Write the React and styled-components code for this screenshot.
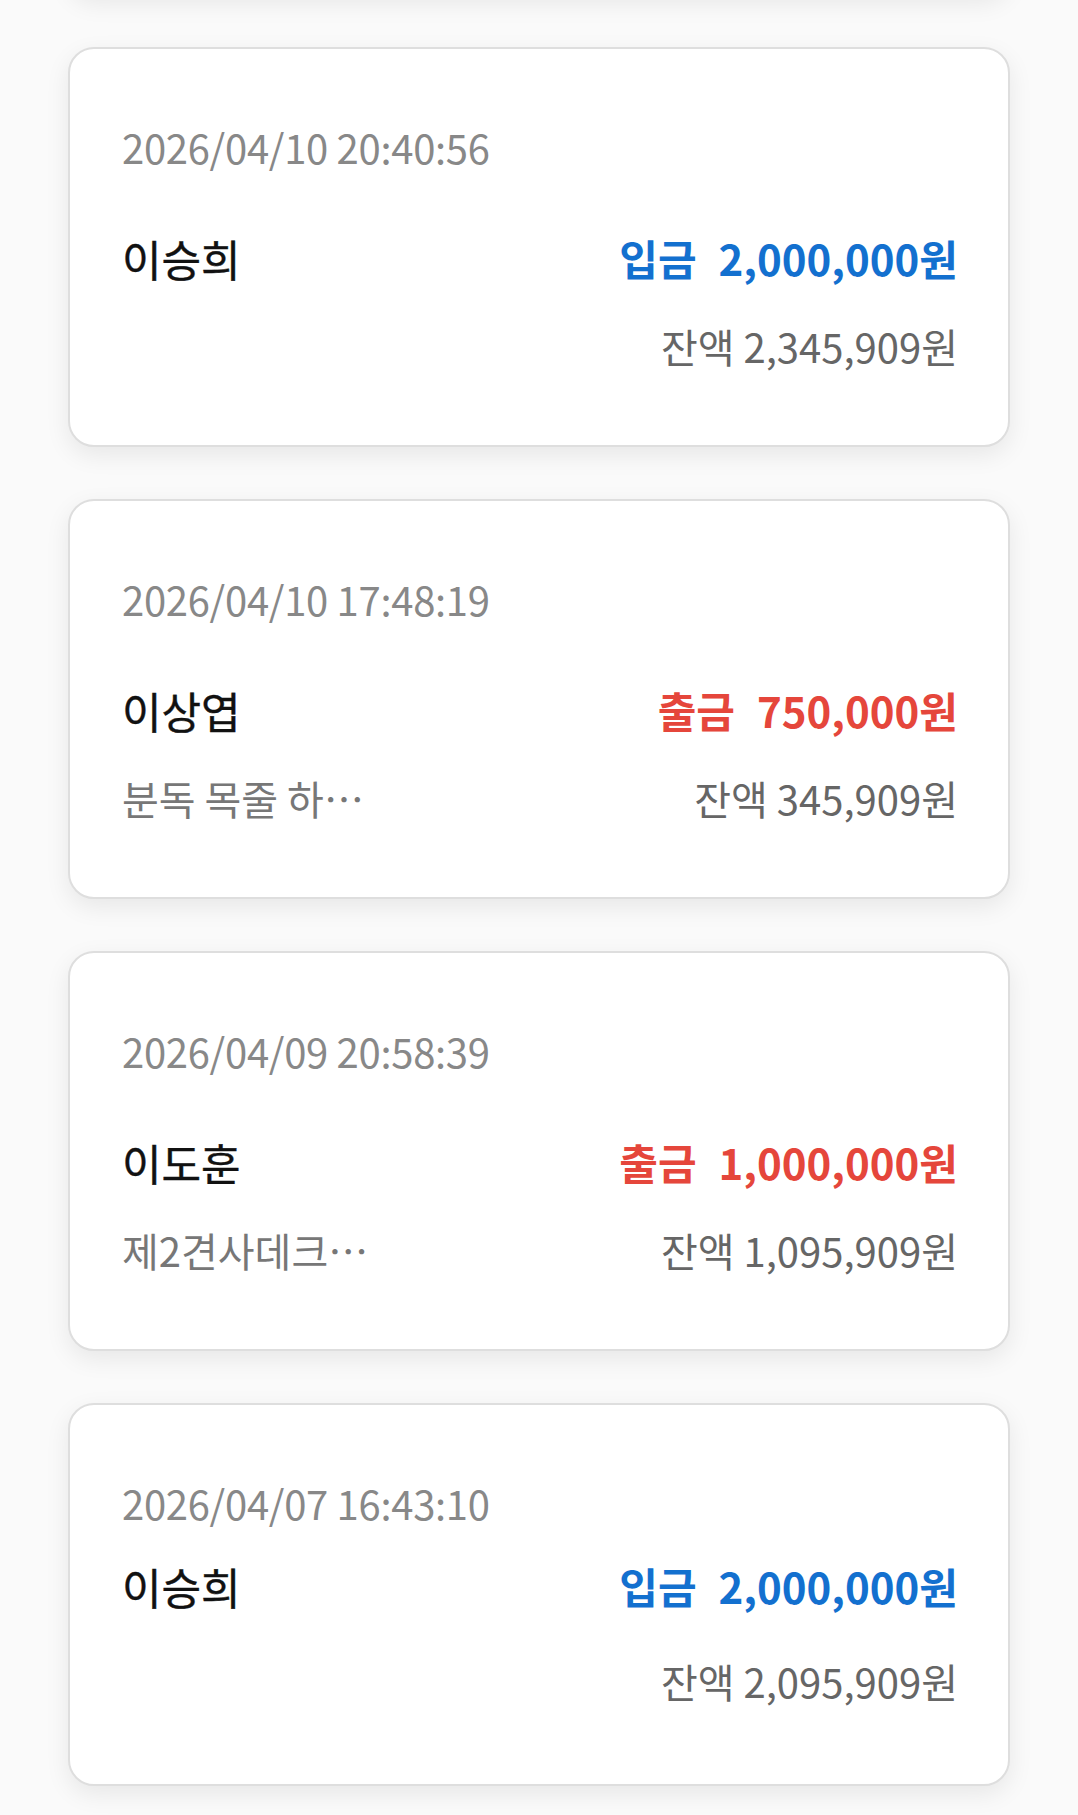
import React from "react";
import styled, { createGlobalStyle } from "styled-components";

const GlobalStyle = createGlobalStyle`
  html, body {
    margin: 0;
    padding: 0;
    background: #fafafa;
  }
  body {
    font-family: "Noto Sans CJK KR", "Noto Sans", sans-serif;
    -webkit-font-smoothing: antialiased;
  }
`;

const Page = styled.div`
  width: 100%;
  min-height: 1815px;
  background: #fafafa;
  overflow: hidden;
`;

const List = styled.div`
  display: flex;
  flex-direction: column;
  gap: 52px;
  padding: 0 68px 40px;
  margin-top: -405px;
`;

const Card = styled.div`
  background: #fff;
  border: 2px solid #dedede;
  border-radius: 26px;
  box-shadow: 0 8px 24px rgba(0, 0, 0, 0.08);
  padding: ${({ $compact }) => ($compact ? "73px 50px 78px 52px" : "73px 50px 74px 52px")};
  display: flex;
  flex-direction: column;
`;

const DateText = styled.div`
  height: 50px;
  line-height: 50px;
  font-size: 40px;
  color: #888;
  letter-spacing: -0.3px;
`;

const Row = styled.div`
  display: flex;
  justify-content: space-between;
  align-items: center;
  margin-top: ${({ $gap }) => $gap}px;
  height: ${({ $h }) => $h}px;
`;

const Name = styled.div`
  font-size: 43px;
  font-weight: 400;
  color: #111;
  line-height: 60px;
  -webkit-text-stroke: 0.4px #111;
`;

const Amount = styled.div`
  font-size: 42px;
  font-weight: 700;
  color: ${({ $type }) => ($type === "in" ? "#1370cf" : "#e5463b")};
  line-height: 60px;
  display: flex;
  gap: 22px;
`;

const Memo = styled.div`
  font-size: 40px;
  color: #777;
  line-height: 50px;
`;

const Balance = styled.div`
  font-size: 40px;
  color: #666;
  line-height: 50px;
  margin-left: auto;
`;

const txs = [
  { date: "2026/04/11 09:12:33", name: "이승희", type: "out", amount: "250,000", balance: "345,909", memo: "" },
  { date: "2026/04/10 20:40:56", name: "이승희", type: "in", amount: "2,000,000", balance: "2,345,909", memo: "" },
  { date: "2026/04/10 17:48:19", name: "이상엽", type: "out", amount: "750,000", balance: "345,909", memo: "분독 목줄 하…" },
  { date: "2026/04/09 20:58:39", name: "이도훈", type: "out", amount: "1,000,000", balance: "1,095,909", memo: "제2견사데크…" },
  { date: "2026/04/07 16:43:10", name: "이승희", type: "in", amount: "2,000,000", balance: "2,095,909", memo: "", compact: true },
];

const TxCard = ({ tx }) => (
  <Card $compact={tx.compact}>
    <DateText>{tx.date}</DateText>
    <Row $gap={tx.compact ? 28 : 56} $h={60}>
      <Name>{tx.name}</Name>
      <Amount $type={tx.type}>
        <span>{tx.type === "in" ? "입금" : "출금"}</span>
        <span>{tx.amount}원</span>
      </Amount>
    </Row>
    <Row $gap={tx.compact ? 40 : 33} $h={50}>
      {tx.memo && <Memo>{tx.memo}</Memo>}
      <Balance>잔액 {tx.balance}원</Balance>
    </Row>
  </Card>
);

export default function App() {
  return (
    <Page>
      <GlobalStyle />
      <List>
        {txs.map((tx, i) => (
          <TxCard key={i} tx={tx} />
        ))}
      </List>
    </Page>
  );
}
